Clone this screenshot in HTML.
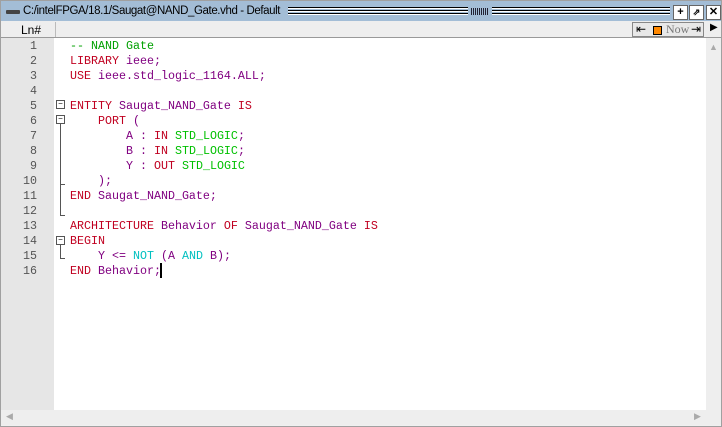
<!DOCTYPE html>
<html><head><style>
body{margin:0;width:722px;height:427px;background:#f0f0f0;position:relative;overflow:hidden;font-family:"Liberation Sans",sans-serif}
.frame{position:absolute;left:0;top:0;width:720px;height:425px;border:1px solid #a0a0a0}
.title{position:absolute;left:1px;top:1px;width:720px;height:20px;background:#a3bdd6;font-size:11.5px;letter-spacing:-0.4px;line-height:21px}
.title .t{position:absolute;left:22px;top:0;color:#000}
.grip{position:absolute;left:5px;top:9px;width:14px;height:4px;background:#444;border-radius:1px}
.lines{position:absolute;top:6px;height:9px;background:repeating-linear-gradient(#000 0 1px,#fff 1px 2px,#a3bdd6 2px 3px)}
.dots{position:absolute;left:470px;top:7px;width:18px;height:7px;background:repeating-linear-gradient(90deg,#223 0 1px,transparent 1px 2px)}
.btn{position:absolute;top:4px;width:13px;height:13px;background:#fff;border:1px solid #666;font-size:11px;line-height:12px;text-align:center;font-weight:bold;letter-spacing:0}
.tool{position:absolute;left:1px;top:21px;width:720px;height:16px;background:#eee;border-bottom:1px solid #999}
.ln{position:absolute;left:1px;top:38px;width:53px;height:372px;background:#e6e6e6}
.code{position:absolute;left:54px;top:38px;width:652px;height:372px;background:#fff}
.hdr{position:absolute;left:20px;top:24px;font-size:12px}
.sep{position:absolute;left:55px;top:22px;width:1px;height:15px;background:#bbb}
pre{margin:0;font-family:"Liberation Mono",monospace;font-size:11.67px;line-height:15px;position:absolute;top:39px}
.nums{left:0;width:37px;text-align:right;color:#555}
.src{left:70px}
.c{color:#00a000}.k{color:#c00020}.i{color:#800080}.g{color:#00c000}.y{color:#00c0c0}
.vs{position:absolute;left:706px;top:38px;width:15px;height:372px;background:#eee}
.hs{position:absolute;left:1px;top:410px;width:720px;height:15px;background:#eee}
.fold{position:absolute;width:7px;height:7px;border:1px solid #555;background:#fff;font-size:8px;line-height:6px;text-align:center}
</style></head><body>
<div class="frame"></div>
<div class="title"><div class="grip"></div><span class="t">C:/intelFPGA/18.1/Saugat@NAND_Gate.vhd - Default</span><div class="lines" style="left:287px;width:180px"></div><div class="dots"></div><div class="lines" style="left:491px;width:178px"></div>
<div class="btn" style="left:672px">+</div><div class="btn" style="left:688px;font-size:9px">⇗</div><div class="btn" style="left:705px">✕</div></div>
<div class="tool"><div class="hdr" style="top:2px">Ln#</div>
<div style="position:absolute;left:631px;top:1px;width:70px;height:13px;border:1px solid #888;background:#e8e8e8;font-family:'Liberation Serif',serif;font-size:12px;color:#777;line-height:13px"><span style="position:absolute;left:3px;color:#000">⇤</span><span style="position:absolute;left:20px;top:3px;width:7px;height:7px;background:#f80;border:1px solid #000"></span><span style="position:absolute;left:33px">Now</span><span style="position:absolute;left:58px;color:#000">⇥</span></div>
<span style="position:absolute;left:709px;top:1px;font-size:10px">▶</span></div>
<div class="sep"></div>
<div class="ln"></div><div class="code"></div>
<pre class="nums">1
2
3
4
5
6
7
8
9
10
11
12
13
14
15
16</pre>
<div class="fold" style="left:56px;top:100px">−</div>
<div class="fold" style="left:56px;top:115px">−</div>
<div style="position:absolute;left:60px;top:124px;width:1px;height:92px;background:#555"></div>
<div style="position:absolute;left:60px;top:184px;width:5px;height:1px;background:#555"></div>
<div style="position:absolute;left:60px;top:215px;width:5px;height:1px;background:#555"></div>
<div class="fold" style="left:56px;top:236px">−</div>
<div style="position:absolute;left:60px;top:245px;width:1px;height:13px;background:#555"></div>
<div style="position:absolute;left:60px;top:258px;width:5px;height:1px;background:#555"></div>
<pre class="src"><span class="c">-- NAND Gate</span>
<span class="k">LIBRARY</span> <span class="i">ieee;</span>
<span class="k">USE</span> <span class="i">ieee.std_logic_1164.ALL;</span>

<span class="k">ENTITY</span> <span class="i">Saugat_NAND_Gate</span> <span class="k">IS</span>
    <span class="k">PORT</span> <span class="i">(</span>
        <span class="i">A :</span> <span class="k">IN</span> <span class="g">STD_LOGIC</span><span class="i">;</span>
        <span class="i">B :</span> <span class="k">IN</span> <span class="g">STD_LOGIC</span><span class="i">;</span>
        <span class="i">Y :</span> <span class="k">OUT</span> <span class="g">STD_LOGIC</span>
    <span class="i">);</span>
<span class="k">END</span> <span class="i">Saugat_NAND_Gate;</span>

<span class="k">ARCHITECTURE</span> <span class="i">Behavior</span> <span class="k">OF</span> <span class="i">Saugat_NAND_Gate</span> <span class="k">IS</span>
<span class="k">BEGIN</span>
    <span class="i">Y &lt;=</span> <span class="y">NOT</span> <span class="i">(A</span> <span class="y">AND</span> <span class="i">B);</span>
<span class="k">END</span> <span class="i">Behavior;</span></pre>
<div style="position:absolute;left:160px;top:263px;width:2px;height:15px;background:#000"></div>
<div class="vs"><span style="position:absolute;left:3px;top:4px;font-size:9px;color:#aaa">▲</span><span style="position:absolute;left:3px;top:372px;font-size:9px;color:#aaa">▼</span></div>
<div class="hs"><span style="position:absolute;left:5px;top:1px;font-size:9px;color:#aaa">◀</span><span style="position:absolute;left:693px;top:1px;font-size:9px;color:#aaa">▶</span></div>
</body></html>
